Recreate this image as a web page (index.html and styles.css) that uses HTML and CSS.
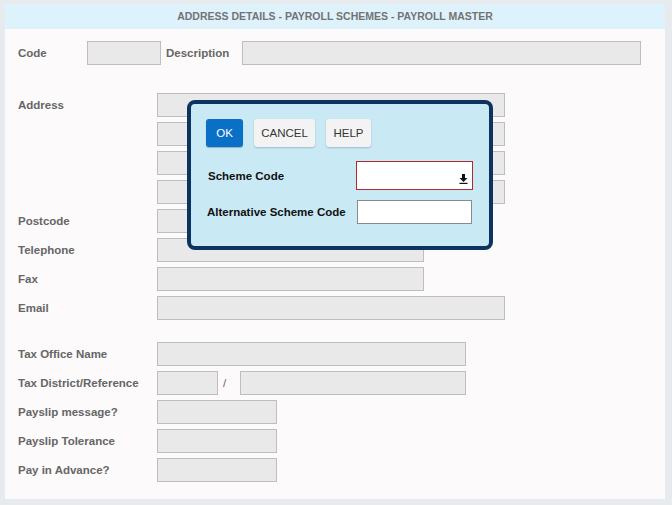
FILE: index.html
```html
<!DOCTYPE html>
<html>
<head>
<meta charset="utf-8">
<link rel="stylesheet" href="styles.css">
</head>
<body>
<div class="panel">
  <div class="header">ADDRESS DETAILS - PAYROLL SCHEMES - PAYROLL MASTER</div>
  <div class="body">
    <div class="row row-code">
      <label class="lbl lbl-code">Code</label>
      <div class="inp w-code"></div>
      <label class="lbl lbl-desc">Description</label>
      <div class="inp w-desc"></div>
    </div>

    <div class="row row-address">
      <label class="lbl">Address</label>
      <div class="stack">
        <div class="inp w-348"></div>
        <div class="inp w-348"></div>
        <div class="inp w-348"></div>
        <div class="inp w-348"></div>
      </div>
    </div>
    <div class="row"><label class="lbl">Postcode</label><div class="inp w-120"></div></div>
    <div class="row"><label class="lbl">Telephone</label><div class="inp w-267"></div></div>
    <div class="row"><label class="lbl">Fax</label><div class="inp w-267"></div></div>
    <div class="row"><label class="lbl">Email</label><div class="inp w-348"></div></div>

    <div class="row row-tax"><label class="lbl">Tax Office Name</label><div class="inp w-309"></div></div>
    <div class="row">
      <label class="lbl">Tax District/Reference</label>
      <div class="inp w-61"></div>
      <span class="slash">/</span>
      <div class="inp w-226"></div>
    </div>
    <div class="row"><label class="lbl">Payslip message?</label><div class="inp w-120"></div></div>
    <div class="row"><label class="lbl">Payslip Tolerance</label><div class="inp w-120"></div></div>
    <div class="row"><label class="lbl">Pay in Advance?</label><div class="inp w-120"></div></div>
  </div>

  <div class="dialog">
    <div class="buttons">
      <button class="btn btn-ok">OK</button>
      <button class="btn btn-plain btn-cancel">CANCEL</button>
      <button class="btn btn-plain">HELP</button>
    </div>
    <div class="drow drow-scheme">
      <span class="dlbl">Scheme Code</span>
      <div class="select">
        <svg class="dl-icon" width="9" height="10" viewBox="0 0 9 10">
          <path d="M3 0h3v4h2.5L4.5 8 0.5 4H3z" fill="#111"/>
          <rect x="0.5" y="8.8" width="8" height="1.2" fill="#111"/>
        </svg>
      </div>
    </div>
    <div class="drow drow-alt">
      <span class="dlbl">Alternative Scheme Code</span>
      <div class="alt-input"></div>
    </div>
  </div>
</div>
</body>
</html>
```

FILE: styles.css
```css
html, body {
  margin: 0;
  padding: 0;
}
body {
  background: #e7ebee;
  width: 672px;
  height: 505px;
  font-family: "Liberation Sans", Arial, sans-serif;
  font-size: 11.5px;
  overflow: hidden;
}
.panel {
  position: relative;
  margin: 4px 0 0 5px;
  width: 660px;
  height: 495px;
  background: #fcfafa;
}
.header {
  height: 25px;
  line-height: 25px;
  background: #def2fc;
  color: #737373;
  font-weight: bold;
  font-size: 10.5px;
  text-align: center;
}
.body {
  padding: 12px 0 0 13px;
}
.row {
  display: flex;
  align-items: flex-start;
  margin-bottom: 5px;
}
.lbl {
  width: 139px;
  flex: none;
  height: 24px;
  line-height: 24px;
  color: #666;
  font-weight: bold;
}
.lbl-code { width: 69px; }
.lbl-desc { width: 76px; margin-left: 5px; }
.row-address { margin-top: 28px; }
.row-tax { margin-top: 22px; }
.stack {
  display: flex;
  flex-direction: column;
  gap: 5px;
}
.inp {
  box-sizing: border-box;
  height: 24px;
  background: #e9e9e9;
  border: 1px solid #bebebe;
  flex: none;
}
.w-code { width: 74px; }
.w-desc { width: 399px; }
.w-348 { width: 348px; }
.w-267 { width: 267px; }
.w-309 { width: 309px; }
.w-120 { width: 120px; }
.w-61 { width: 61px; }
.w-226 { width: 226px; }
.slash {
  width: 22px;
  line-height: 24px;
  color: #666;
  padding-left: 5px;
  box-sizing: border-box;
}

.dialog {
  position: absolute;
  left: 182px;
  top: 96px;
  width: 306px;
  height: 150px;
  box-sizing: border-box;
  border: 4px solid #0d3361;
  border-radius: 8px;
  background: #c9e9f5;
  padding: 15px 16px 0 15px;
}
.buttons {
  display: flex;
  gap: 11px;
}
.btn {
  height: 28px;
  border: none;
  border-radius: 3px;
  font-family: "Liberation Sans", Arial, sans-serif;
  font-size: 11.5px;
  padding: 0;
}
.btn-ok {
  width: 37px;
  background: #0a6fc7;
  color: #fff;
  box-shadow: 0 1px 1px rgba(0,0,0,0.25);
}
.btn-plain {
  background: #f3f3f3;
  color: #333;
  width: 45px;
  box-shadow: 0 1px 2px rgba(0,0,0,0.2);
}
.btn-cancel { width: 61px; }
.drow {
  display: flex;
  justify-content: space-between;
  align-items: center;
}
.drow-scheme { margin-top: 14px; padding-left: 2px; }
.drow-alt { margin-top: 10px; padding-left: 1px; }
.dlbl {
  font-weight: bold;
  color: #111;
  font-size: 11.5px;
}
.select {
  position: relative;
  box-sizing: border-box;
  width: 117px;
  height: 29px;
  background: #fff;
  border: 1px solid #b3282d;
}
.dl-icon {
  position: absolute;
  right: 4px;
  top: 12px;
}
.alt-input {
  box-sizing: border-box;
  width: 115px;
  height: 24px;
  background: #fff;
  border: 1px solid #8a8a8a;
  margin-right: 1px;
}
```
